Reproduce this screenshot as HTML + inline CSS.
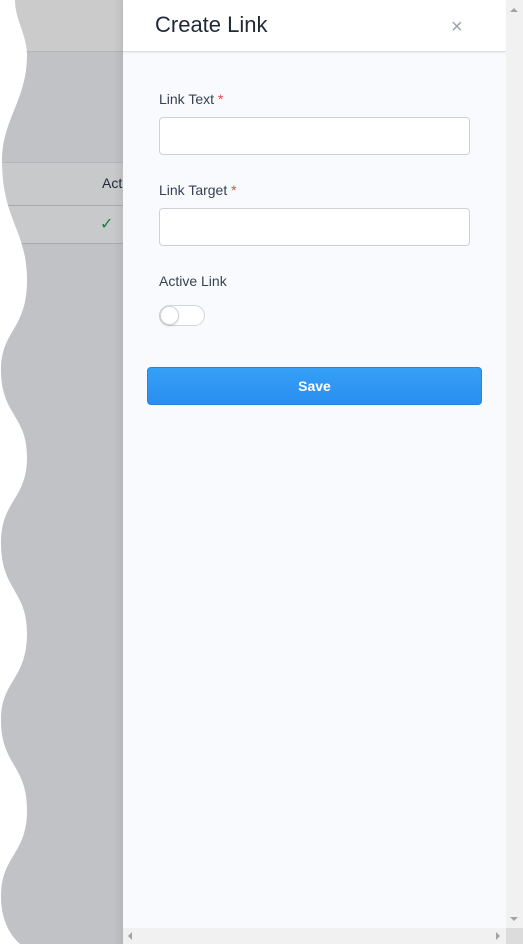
<!DOCTYPE html>
<html><head><style>
*{margin:0;padding:0;box-sizing:border-box}
body{width:523px;height:944px;overflow:hidden;position:relative;background:#fff;font-family:"Liberation Sans",sans-serif}
.bg{position:absolute;left:0;top:0;width:123px;height:944px;background:#c0c2c5}
.abs{position:absolute}
.lbl{position:absolute;left:159px;font-size:14px;color:#374151}
.lbl span{color:#ef4444}
.inp{position:absolute;left:159px;width:311px;height:38px;background:#fff;border:1px solid #ced2d7;border-radius:4px}
</style></head><body>
<div class="bg"></div>
<div class="abs" style="left:0;top:0;width:123px;height:52px;background:#cbcbcb;border-bottom:1px solid #b4b6b9"></div>
<div class="abs" style="left:0;top:162px;width:123px;height:44px;background:#c8c9cb;border-top:1px solid #b4b6b9;border-bottom:1px solid #a9abae"></div>
<div class="abs" style="left:0;top:206px;width:123px;height:38px;background:#c8c9cb;border-bottom:1px solid #a9abae"></div>
<div class="abs" style="left:102px;top:175px;font-size:14px;color:#1f2937">Acti</div>
<div class="abs" style="left:100px;top:214px;font-size:16px;color:#15803d">✓</div>
<svg class="abs" style="left:0;top:0" width="40" height="944"><path fill="#fff" d="M0,0 L15,0 C15,20 27,35 27,55 C27,100 2,120 2,160 C2,220 27,230 27,280 C27,330 1,330 1,370 C1,415 27,415 27,457 C27,500 1,500 1,543 C1,590 27,590 27,633 C27,680 1,680 1,720 C1,765 27,765 27,810 C27,855 1,855 1,897 C1,920 10,935 20,944 L0,944 Z"/></svg>
<div class="abs" style="left:113px;top:0;width:10px;height:944px;background:linear-gradient(to right,rgba(0,0,0,0),rgba(0,0,0,0.06))"></div>
<div class="abs" style="left:123px;top:0;width:383px;height:944px;background:#f8fafd"></div>
<div class="abs" style="left:123px;top:0;width:383px;height:52px;background:#fff;border-bottom:1px solid #d8dce1;box-shadow:0 1px 2px rgba(0,0,0,0.06)"></div>
<div class="abs" style="left:155px;top:12px;font-size:22px;color:#1f2937">Create Link</div>
<div class="abs" style="left:451px;top:16px;font-size:20px;color:#9ca3af">×</div>
<div class="lbl" style="top:91px">Link Text <span>*</span></div>
<div class="inp" style="top:117px"></div>
<div class="lbl" style="top:182px">Link Target <span>*</span></div>
<div class="inp" style="top:208px"></div>
<div class="lbl" style="top:273px">Active Link</div>
<div class="abs" style="left:159px;top:305px;width:46px;height:21px;border-radius:11px;background:#fff;border:1px solid #d1d5db"></div>
<div class="abs" style="left:160px;top:306px;width:19px;height:19px;border-radius:50%;background:#fff;border:1px solid #d1d5db;box-shadow:0 1px 2px rgba(0,0,0,0.15)"></div>
<div class="abs" style="left:147px;top:367px;width:335px;height:38px;border-radius:4px;background:linear-gradient(#35a0f7,#2a8ef0);border:1px solid #2584e0;color:#fff;font-weight:bold;font-size:14px;text-align:center;line-height:36px">Save</div>
<div class="abs" style="left:506px;top:0;width:17px;height:944px;background:#f1f1f1"></div>
<div class="abs" style="left:510px;top:8px;width:0;height:0;border-left:4px solid transparent;border-right:4px solid transparent;border-bottom:4px solid #a3a3a3"></div>
<div class="abs" style="left:510px;top:917px;width:0;height:0;border-left:4px solid transparent;border-right:4px solid transparent;border-top:4px solid #a3a3a3"></div>
<div class="abs" style="left:123px;top:928px;width:383px;height:16px;background:#f1f1f1"></div>
<div class="abs" style="left:506px;top:928px;width:17px;height:16px;background:#dcdcdc"></div>
<div class="abs" style="left:128px;top:932px;width:0;height:0;border-top:4px solid transparent;border-bottom:4px solid transparent;border-right:4px solid #a3a3a3"></div>
<div class="abs" style="left:496px;top:932px;width:0;height:0;border-top:4px solid transparent;border-bottom:4px solid transparent;border-left:4px solid #a3a3a3"></div>
</body></html>
